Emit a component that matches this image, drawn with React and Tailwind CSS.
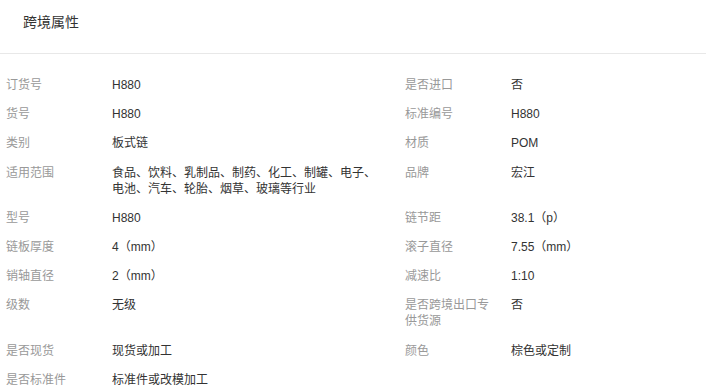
const rows = [
  ['订货号', 'H880', '是否进口', '否'],
  ['货号', 'H880', '标准编号', 'H880'],
  ['类别', '板式链', '材质', 'POM'],
  ['适用范围', '食品、饮料、乳制品、制药、化工、制罐、电子、电池、汽车、轮胎、烟草、玻璃等行业', '品牌', '宏江'],
  ['型号', 'H880', '链节距', '38.1（p）'],
  ['链板厚度', '4（mm）', '滚子直径', '7.55（mm）'],
  ['销轴直径', '2（mm）', '减速比', '1:10'],
  ['级数', '无级', '是否跨境出口专供货源', '否'],
  ['是否现货', '现货或加工', '颜色', '棕色或定制'],
  ['是否标准件', '标准件或改模加工', null, null],
]

function Item({ label, value }) {
  if (!label) return <div />
  return (
    <div className="flex pl-[6px] pt-[7px] pb-[6.2px] text-[12px] leading-4">
      <div className="w-[106px] shrink-0 pr-[14px] text-[#999]">{label}</div>
      <div className="flex-1 pr-[16px] text-[#333]">{value}</div>
    </div>
  )
}

export default function App() {
  return (
    <div
      className="w-[706px] h-[391px] overflow-hidden bg-white"
      style={{ fontFamily: '"Liberation Sans", "Noto Sans CJK SC", sans-serif' }}
    >
      <div className="h-[54px] border-b border-[#e8e8e8] pl-[23px] pt-[13px] text-[14px] leading-[18px] text-[#333]">
        跨境属性
      </div>
      <div className="grid grid-cols-[399px_1fr] pt-[16px]">
        {rows.map(([l1, v1, l2, v2], i) => (
          <div key={i} className="contents">
            <Item label={l1} value={v1} />
            <Item label={l2} value={v2} />
          </div>
        ))}
      </div>
    </div>
  )
}
